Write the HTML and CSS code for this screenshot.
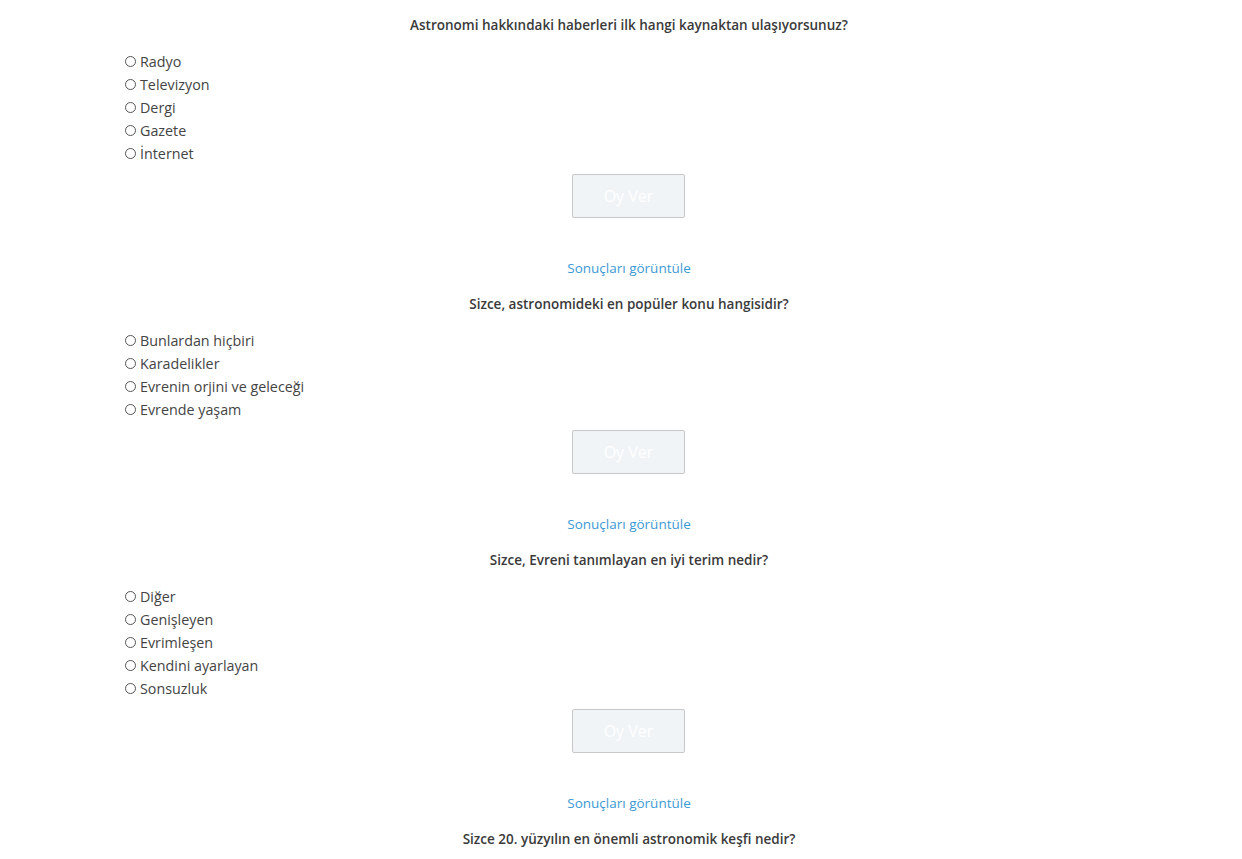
FILE: index.html
```html
<!DOCTYPE html>
<html lang="tr">
<head>
<meta charset="utf-8">
<link rel="stylesheet" href="styles.css">
</head>
<body>
<div class="page">
  <form class="poll">
    <h3 class="poll-title">Astronomi hakkındaki haberleri ilk hangi kaynaktan ulaşıyorsunuz?</h3>
    <ul class="options">
      <li><label><input type="radio" name="p1"><span>Radyo</span></label></li>
      <li><label><input type="radio" name="p1"><span>Televizyon</span></label></li>
      <li><label><input type="radio" name="p1"><span>Dergi</span></label></li>
      <li><label><input type="radio" name="p1"><span>Gazete</span></label></li>
      <li><label><input type="radio" name="p1"><span>İnternet</span></label></li>
    </ul>
    <div class="actions"><button type="button" class="vote" disabled>Oy Ver</button></div>
    <a class="results" href="#">Sonuçları görüntüle</a>
  </form>
  <form class="poll">
    <h3 class="poll-title">Sizce, astronomideki en popüler konu hangisidir?</h3>
    <ul class="options">
      <li><label><input type="radio" name="p2"><span>Bunlardan hiçbiri</span></label></li>
      <li><label><input type="radio" name="p2"><span>Karadelikler</span></label></li>
      <li><label><input type="radio" name="p2"><span>Evrenin orjini ve geleceği</span></label></li>
      <li><label><input type="radio" name="p2"><span>Evrende yaşam</span></label></li>
    </ul>
    <div class="actions"><button type="button" class="vote" disabled>Oy Ver</button></div>
    <a class="results" href="#">Sonuçları görüntüle</a>
  </form>
  <form class="poll">
    <h3 class="poll-title">Sizce, Evreni tanımlayan en iyi terim nedir?</h3>
    <ul class="options">
      <li><label><input type="radio" name="p3"><span>Diğer</span></label></li>
      <li><label><input type="radio" name="p3"><span>Genişleyen</span></label></li>
      <li><label><input type="radio" name="p3"><span>Evrimleşen</span></label></li>
      <li><label><input type="radio" name="p3"><span>Kendini ayarlayan</span></label></li>
      <li><label><input type="radio" name="p3"><span>Sonsuzluk</span></label></li>
    </ul>
    <div class="actions"><button type="button" class="vote" disabled>Oy Ver</button></div>
    <a class="results" href="#">Sonuçları görüntüle</a>
  </form>
  <form class="poll">
    <h3 class="poll-title">Sizce 20. yüzyılın en önemli astronomik keşfi nedir?</h3>
  </form>
</div>
</body>
</html>
```
FILE: styles.css
```css
html, body {
  margin: 0;
  padding: 0;
  background: #fff;
}
body {
  font-family: "Open Sans", "Liberation Sans", sans-serif;
  color: #444;
  overflow: hidden;
}
.page {
  width: 1008px;
  margin-left: 125px;
  padding-top: 15px;
}
.poll {
  display: flex;
  flex-direction: column;
  margin-bottom: 16px;
}
.poll-title {
  margin: 0 0 14.5px;
  font-size: 13.5px;
  font-weight: 600;
  line-height: 20px;
  text-align: center;
  color: #3a3a3a;
}
.options {
  list-style: none;
  margin: 0 0 9.5px;
  padding: 0;
}
.options li {
  height: 23px;
  line-height: 23px;
  font-size: 14.3px;
}
.options label {
  display: inline-flex;
  align-items: center;
  gap: 4px;
}
.options input {
  appearance: none;
  -webkit-appearance: none;
  width: 11px;
  height: 11px;
  margin: 0;
  border: 1px solid #555;
  border-radius: 50%;
  background: #fff;
  box-sizing: border-box;
}
.actions {
  display: flex;
  justify-content: center;
  margin-bottom: 40px;
}
.vote {
  width: 113px;
  height: 44px;
  margin-right: 1px;
  background: #f1f4f7;
  border: 1px solid #c8c8c8;
  border-radius: 2px;
  color: #fff;
  font-family: "Open Sans", "Liberation Sans", sans-serif;
  font-size: 16px;
  padding: 0;
}
.results {
  align-self: center;
  font-size: 13.5px;
  line-height: 20px;
  color: #3d9ad4;
  text-decoration: none;
}
```
